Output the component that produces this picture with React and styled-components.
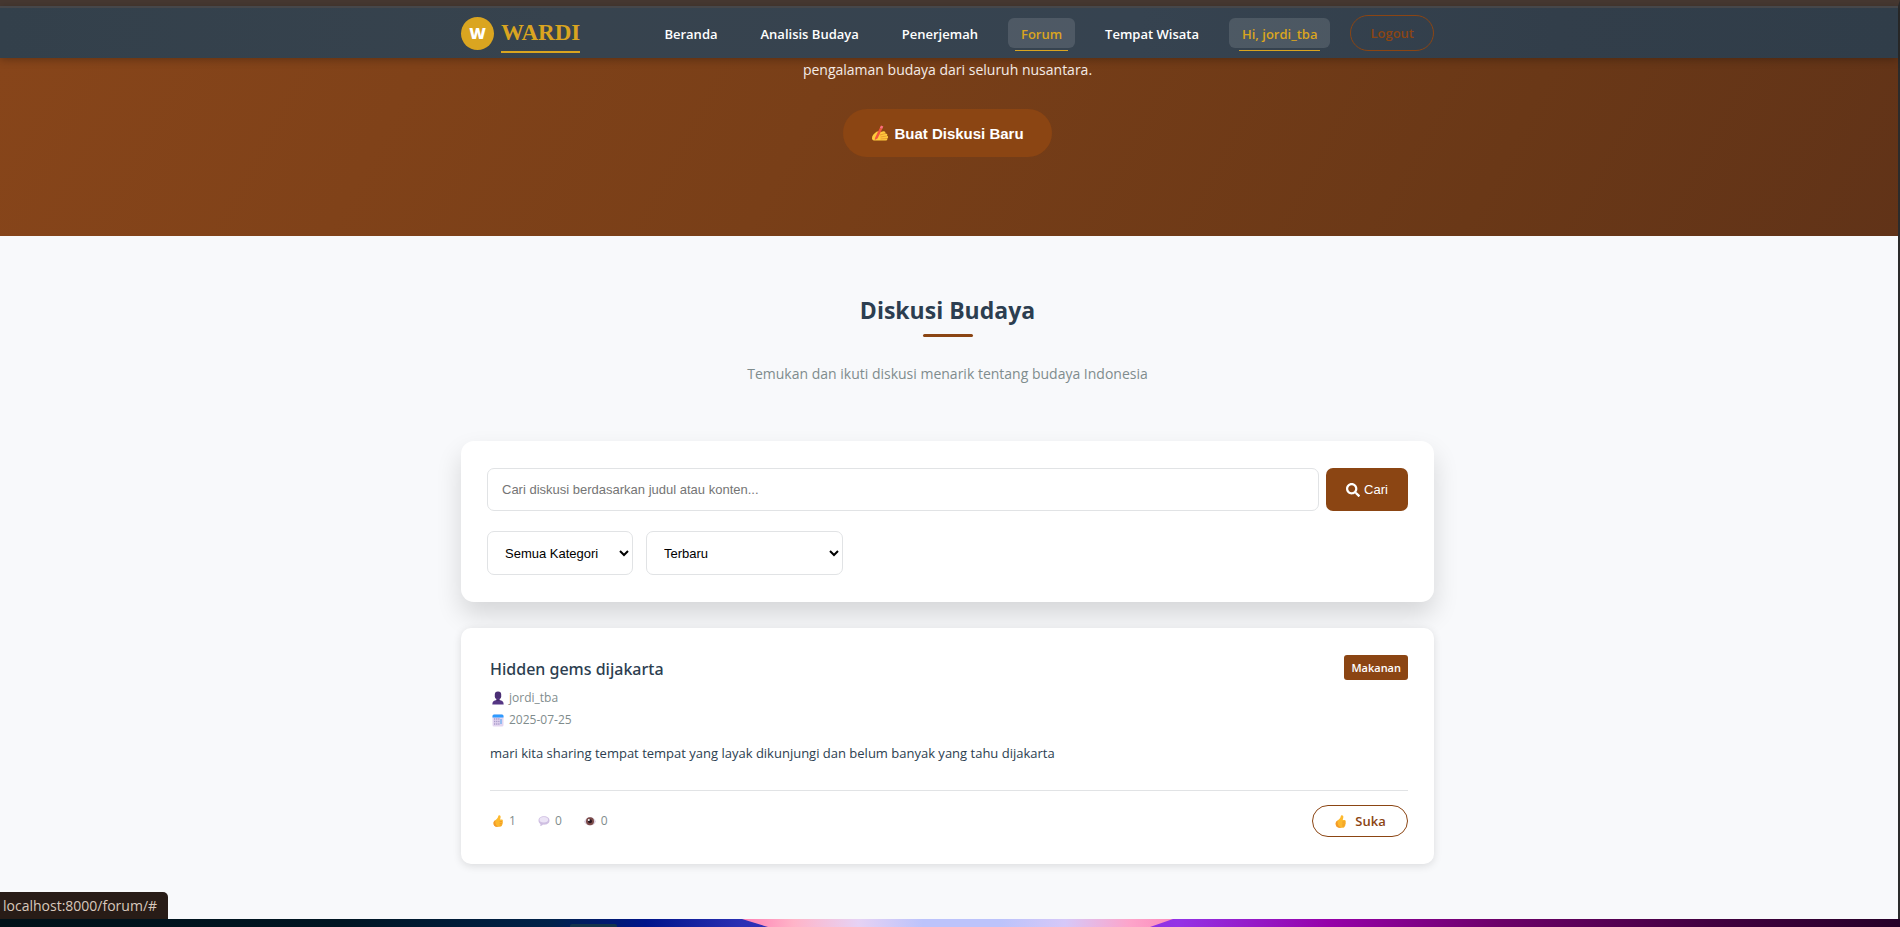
import React from 'react';
import styled, { createGlobalStyle, css } from 'styled-components';
import { FaSearch } from 'react-icons/fa';

const colors = {
    primary: '#8b4513',
    gold: '#daa520',
    dark: '#2c3e50',
    grey: '#7f8c8d',
    line: '#e1e3e5',
    page: '#f8f9fb',
};

const fonts = {
    body: '"Open Sans", "Noto Sans", sans-serif',
    title: '"Noto Sans", "Open Sans", sans-serif',
    control: '"Liberation Sans", Arial, sans-serif',
    brand: '"Liberation Serif", "Times New Roman", serif',
};

const gutter = '3px';

const GlobalStyle = createGlobalStyle`
    *, *::before, *::after {
        box-sizing: border-box;
    }
    body {
        margin: 0;
        background: #2a211d;
        color: ${colors.dark};
        font-family: ${fonts.body};
    }
    h1, h2, h3, p, ul {
        margin: 0;
        padding: 0;
    }
    a {
        color: inherit;
        text-decoration: none;
    }
    button, input, select {
        font-family: ${fonts.control};
    }
`;

const Desktop = styled.div`
    display: flex;
    flex-direction: column;
    min-height: 100vh;
`;

const WindowFrame = styled.div`
    position: relative;
    flex: 1;
    display: flex;
    flex-direction: column;
    background: ${colors.page};
    border-top: 6px solid #463831;
    border-right: 2px solid #2b2b2b;
`;

const Header = styled.header`
    position: relative;
    height: 52px;
    padding-right: ${gutter};
    border-top: 2px solid #46474a;
    background: linear-gradient(90deg, #33404b 0%, #37434e 30%, #364350 60%, #323e4a 82%, #303d49 100%);
    box-shadow: 0 2px 8px rgba(0, 0, 0, 0.25);
`;

const Container = styled.div`
    width: 100%;
    max-width: 973px;
    margin: 0 auto;
`;

const HeaderInner = styled(Container)`
    display: flex;
    align-items: center;
    justify-content: space-between;
    height: 100%;
`;

const Brand = styled.a`
    display: flex;
    align-items: center;
    gap: 7px;
`;

const BrandMark = styled.span`
    display: flex;
    align-items: center;
    justify-content: center;
    width: 33px;
    height: 33px;
    border-radius: 50%;
    background: ${colors.gold};
    color: #fff;
    font-size: 16px;
    font-weight: 800;
`;

const BrandName = styled.span`
    position: relative;
    color: ${colors.gold};
    font-family: ${fonts.brand};
    font-size: 23px;
    font-weight: 700;
    line-height: 24px;
    &::after {
        content: '';
        position: absolute;
        left: 0;
        right: 0;
        bottom: -8px;
        height: 2px;
        background: ${colors.gold};
    }
`;

const Nav = styled.nav`
    display: flex;
    align-items: center;
    gap: 17px;
`;

const activeLink = css`
    background: rgba(255, 255, 255, 0.12);
    color: ${colors.gold};
    &::after {
        content: '';
        position: absolute;
        left: 10%;
        right: 10%;
        bottom: -3px;
        height: 1px;
        background: ${colors.gold};
    }
`;

const NavLink = styled.a`
    position: relative;
    padding: 2px 13px 0;
    border-radius: 6px;
    color: #fff;
    font-size: 13px;
    font-weight: 600;
    line-height: 28px;
    white-space: nowrap;
    ${props => props.$active && activeLink}
`;

const LogoutLink = styled.a`
    margin-left: 3px;
    padding: 0 19px;
    border: 1px solid ${colors.primary};
    border-radius: 18px;
    color: ${colors.primary};
    font-size: 13px;
    font-weight: 600;
    line-height: 34px;
`;

const Hero = styled.section`
    display: flex;
    flex-direction: column;
    align-items: center;
    gap: 28px;
    padding: 0 ${gutter} 79px 0;
    background: linear-gradient(118deg, #87451a 0%, #793f18 42%, #6a3817 78%, #613318 100%);
`;

const HeroText = styled.p`
    color: #f4ece7;
    font-size: 14px;
    line-height: 23px;
`;

const CreateButton = styled.button`
    display: flex;
    align-items: center;
    gap: 5px;
    height: 48px;
    padding: 0 28px;
    border: 0;
    border-radius: 24px;
    background: ${colors.primary};
    color: #fff;
    font-size: 15px;
    font-weight: 700;
`;

const Section = styled.main`
    flex: 1;
    padding: 58px ${gutter} 55px 0;
`;

const SectionTitle = styled.h2`
    position: relative;
    font-size: 23px;
    font-weight: 700;
    line-height: 32px;
    text-align: center;
    &::after {
        content: '';
        position: absolute;
        left: calc(50% - 25px);
        bottom: -11px;
        width: 50px;
        height: 3px;
        border-radius: 2px;
        background: ${colors.primary};
    }
`;

const SectionSubtitle = styled.p`
    margin: 36px 0 55px;
    color: ${colors.grey};
    font-size: 14px;
    line-height: 24px;
    text-align: center;
`;

const SearchCard = styled.form`
    display: flex;
    flex-direction: column;
    gap: 20px;
    padding: 27px 26px;
    border-radius: 13px;
    background: #fff;
    box-shadow: 0 13px 26px rgba(0, 10, 0, 0.14);
`;

const SearchRow = styled.div`
    display: flex;
    gap: 7px;
`;

const FilterRow = styled.div`
    display: flex;
    gap: 13px;
`;

const SearchInput = styled.input`
    flex: 1;
    height: 43px;
    padding: 0 14px;
    border: 1px solid ${colors.line};
    border-radius: 7px;
    font-size: 13px;
    &::placeholder {
        color: #757575;
    }
`;

const SearchButton = styled.button`
    display: flex;
    align-items: center;
    justify-content: center;
    gap: 4px;
    width: 82px;
    border: 0;
    border-radius: 7px;
    background: ${colors.primary};
    color: #fff;
    font-size: 13px;
`;

const FilterSelect = styled.select`
    width: ${props => props.$width};
    height: 44px;
    padding: 0 0 0 13px;
    border: 1px solid ${colors.line};
    border-radius: 7px;
    background: #fff;
    color: #000;
    font-size: 13px;
`;

const ThreadCard = styled.article`
    margin-top: 26px;
    padding: 27px 26px 27px 29px;
    border-radius: 10px;
    background: #fff;
    box-shadow: 0 2px 8px rgba(0, 0, 0, 0.12);
`;

const ThreadHeader = styled.div`
    display: flex;
    align-items: flex-start;
    justify-content: space-between;
`;

const ThreadTitle = styled.h3`
    padding-bottom: 4px;
    font-family: ${fonts.title};
    font-size: 16px;
    font-weight: 500;
    line-height: 28px;
`;

const Category = styled.span`
    padding: 0 7px;
    border-radius: 3px;
    background: ${colors.primary};
    color: #fff;
    font-size: 11px;
    font-weight: 600;
    line-height: 25px;
`;

const Meta = styled.span`
    display: flex;
    align-items: center;
    gap: 5px;
    padding-left: 2px;
    color: ${colors.grey};
    font-size: 12px;
    line-height: 22px;
`;

const ThreadText = styled.p`
    margin: 10px 0 25px;
    font-size: 13px;
    line-height: 24px;
`;

const ThreadFooter = styled.div`
    display: flex;
    align-items: center;
    justify-content: space-between;
    padding-top: 14px;
    border-top: 1px solid ${colors.line};
`;

const Stats = styled.div`
    display: flex;
    gap: 20px;
`;

const LikeButton = styled.button`
    display: flex;
    align-items: center;
    justify-content: center;
    gap: 8px;
    width: 96px;
    height: 32px;
    border: 1px solid ${colors.primary};
    border-radius: 16px;
    background: #fff;
    color: ${colors.primary};
    font-family: ${fonts.body};
    font-size: 13px;
    font-weight: 600;
`;

const StatusBubble = styled.div`
    position: absolute;
    left: 0;
    bottom: 0;
    padding: 0 11px 0 3px;
    border-top-right-radius: 5px;
    background: #281c17;
    color: #d8c8bc;
    font-size: 14px;
    line-height: 27px;
`;

const Wallpaper = styled.svg`
    display: block;
    width: 100%;
    height: 8px;
`;

const WritingHand = () => (
    <svg width="18" height="18" viewBox="0 0 18 18" aria-hidden="true">
        <path d="M1 14.500C0.800 12 3 9.500 5.500 7.800C7 6.800 8.400 7.200 8.500 8.200L12.500 7.200C14 7 15 8.400 14.200 9.400C16 9.200 17 10.700 16 11.800C17.500 12.200 17.500 14 16.300 14.400C16.700 15.600 15.800 16.600 14.300 16.600H4C2 16.600 1 15.800 1 14.500Z" fill="#ffc93c" />
        <path d="M9 11L14 9.600M9.500 13L15.800 12M9.500 15L16 14.500" stroke="#e8912d" strokeWidth="0.800" />
        <path d="M4 14L8.800 4L11.200 5L6.500 14.500L3.800 16Z" fill="#f0573f" />
        <path d="M8.800 4L10 1.500L12.300 2.600L11.200 5Z" fill="#ff6f7d" />
    </svg>
);

const Thumb = ({ size = 13 }) => (
    <svg width={size} height={size} viewBox="0 0 13 14" aria-hidden="true">
        <path d="M7.500 0.400C9 -0.200 9.900 1.300 9.500 3L8.900 5.300H10.500C12.300 5.300 12.600 7 11.700 7.600C12.500 8.200 12.400 9.500 11.600 9.900C12 10.700 11.700 11.600 11 11.900C11.100 13 10.400 13.700 9 13.700H5C2.700 13.700 1.300 12 1.300 9.500C1.300 7.500 2.500 6.400 4 5.400C6 4 6.800 2.500 6.800 1.200Z" fill="#fdb92e" />
        <path d="M8.500 7.600H11.700M8.500 9.800H11.600M8.400 11.800H11" stroke="#e58a22" strokeWidth="0.700" />
        <path d="M1.300 9.500C1.300 12 2.700 13.700 5 13.700H8C5 12.800 3.200 11.500 3.300 6C2 6.900 1.300 8 1.300 9.500Z" fill="#f39a2b" />
    </svg>
);

const Person = () => (
    <svg width="12" height="14" viewBox="0 0 12 14" aria-hidden="true">
        <rect x="2.800" y="0.500" width="6.400" height="7.800" rx="3" fill="#4b2f74" />
        <path d="M4.500 7H7.500V9C10 9.300 11.700 10.500 11.700 13.500H0.300C0.300 10.500 2 9.300 4.500 9Z" fill="#553684" />
        <path d="M4.500 8.200C5.400 8.900 6.600 8.900 7.500 8.200V9.500H4.500Z" fill="#351d52" />
    </svg>
);

const Calendar = () => (
    <svg width="12" height="13" viewBox="0 0 12 13" aria-hidden="true">
        <rect x="0.500" y="0.500" width="11" height="12" rx="1.500" fill="#e3d5f0" />
        <path d="M0.500 3.500V2Q0.500 0.500 2 0.500H10Q11.500 0.500 11.500 2V3.500Z" fill="#2e9bff" />
        <path d="M2 5H7.500M2 7.500H7.500M2 10H7.500" stroke="#a99cca" strokeWidth="1.300" strokeDasharray="1.300 0.800" />
        <path d="M9 5V10" stroke="#6aaef2" strokeWidth="1.300" />
    </svg>
);

const Bubble = () => (
    <svg width="12" height="12" viewBox="0 0 12 12" aria-hidden="true">
        <path d="M6 1.200C9.300 1.200 11.500 3 11.500 5.500C11.500 8 9.300 9.700 6 9.700L5 9.600C4 10.800 3 11 1.800 11C2.500 10.300 2.600 9.500 2.400 8.900C1.200 8.100 0.500 7 0.500 5.500C0.500 3 2.700 1.200 6 1.200Z" fill="#cfbfe2" />
        <ellipse cx="5.800" cy="4.700" rx="4.300" ry="2.700" fill="#ece4f6" />
    </svg>
);

const Eye = () => (
    <svg width="12" height="12" viewBox="0 0 12 12" aria-hidden="true">
        <path d="M0 6.800C1.500 3.500 3.700 2 6.200 2S10.500 3.500 12 6.500C10.500 9.500 8.500 10.500 6 10.500S1.500 9.500 0 6.800Z" fill="#dcd2e2" />
        <circle cx="6" cy="6.200" r="4" fill="#7a4a48" />
        <circle cx="6" cy="6.200" r="2" fill="#2a1620" />
        <circle cx="4.800" cy="4.900" r="1" fill="#fff" />
    </svg>
);

const DesktopWallpaper = () => (
    <Wallpaper viewBox="0 0 1900 8" preserveAspectRatio="none" aria-hidden="true">
        <defs>
            <linearGradient id="sky">
                <stop offset="0" stopColor="#001219" />
                <stop offset="0.180" stopColor="#001522" />
                <stop offset="0.290" stopColor="#00224a" />
                <stop offset="0.340" stopColor="#00148a" />
                <stop offset="0.390" stopColor="#2a30b4" />
                <stop offset="0.620" stopColor="#9433e6" />
                <stop offset="0.700" stopColor="#9600a8" />
                <stop offset="0.790" stopColor="#6c0068" />
                <stop offset="0.900" stopColor="#420040" />
                <stop offset="1" stopColor="#260028" />
            </linearGradient>
            <linearGradient id="bloom">
                <stop offset="0" stopColor="#ff7fb4" />
                <stop offset="0.120" stopColor="#ffb4c8" />
                <stop offset="0.270" stopColor="#e6d2f4" />
                <stop offset="0.420" stopColor="#bcc3fb" />
                <stop offset="0.600" stopColor="#bcc3fb" />
                <stop offset="0.750" stopColor="#d6c8f8" />
                <stop offset="0.900" stopColor="#fda4ca" />
                <stop offset="1" stopColor="#fc8cbc" />
            </linearGradient>
        </defs>
        <rect width="1900" height="8" fill="url(#sky)" />
        <path d="M742 0H1173L1150 8H768Z" fill="url(#bloom)" />
        <rect x="570" y="5" width="47" height="6" rx="2" fill="#12344c" />
    </Wallpaper>
);

const navItems = [
    { label: 'Beranda' },
    { label: 'Analisis Budaya' },
    { label: 'Penerjemah' },
    { label: 'Forum', active: true },
    { label: 'Tempat Wisata' },
    { label: 'Hi, jordi_tba', active: true },
];

const threads = [
    {
        id: 1,
        title: 'Hidden gems dijakarta',
        author: 'jordi_tba',
        date: '2025-07-25',
        category: 'Makanan',
        content: 'mari kita sharing tempat tempat yang layak dikunjungi dan belum banyak yang tahu dijakarta',
        likes: 1,
        comments: 0,
        views: 0,
    },
];

const Thread = ({ thread }) => (
    <ThreadCard>
        <ThreadHeader>
            <ThreadTitle>{thread.title}</ThreadTitle>
            <Category>{thread.category}</Category>
        </ThreadHeader>
        <Meta><Person />{thread.author}</Meta>
        <Meta><Calendar />{thread.date}</Meta>
        <ThreadText>{thread.content}</ThreadText>
        <ThreadFooter>
            <Stats>
                <Meta><Thumb size={12} />{thread.likes}</Meta>
                <Meta><Bubble />{thread.comments}</Meta>
                <Meta><Eye />{thread.views}</Meta>
            </Stats>
            <LikeButton type="button"><Thumb />Suka</LikeButton>
        </ThreadFooter>
    </ThreadCard>
);

const App = () => (
    <Desktop>
        <GlobalStyle />
        <WindowFrame>
            <Header>
                <HeaderInner>
                    <Brand href="#">
                        <BrandMark>W</BrandMark>
                        <BrandName>WARDI</BrandName>
                    </Brand>
                    <Nav>
                        {navItems.map(item => (
                            <NavLink key={item.label} href="#" $active={item.active}>
                                {item.label}
                            </NavLink>
                        ))}
                        <LogoutLink href="#">Logout</LogoutLink>
                    </Nav>
                </HeaderInner>
            </Header>
            <Hero>
                <HeroText>pengalaman budaya dari seluruh nusantara.</HeroText>
                <CreateButton type="button"><WritingHand />Buat Diskusi Baru</CreateButton>
            </Hero>
            <Section>
                <Container>
                    <SectionTitle>Diskusi Budaya</SectionTitle>
                    <SectionSubtitle>
                        Temukan dan ikuti diskusi menarik tentang budaya Indonesia
                    </SectionSubtitle>
                    <SearchCard onSubmit={e => e.preventDefault()}>
                        <SearchRow>
                            <SearchInput
                                type="text"
                                aria-label="Cari diskusi"
                                placeholder="Cari diskusi berdasarkan judul atau konten..."
                            />
                            <SearchButton type="submit"><FaSearch size={14} />Cari</SearchButton>
                        </SearchRow>
                        <FilterRow>
                            <FilterSelect $width="146px" aria-label="Kategori">
                                <option>Semua Kategori</option>
                            </FilterSelect>
                            <FilterSelect $width="197px" aria-label="Urutkan">
                                <option>Terbaru</option>
                            </FilterSelect>
                        </FilterRow>
                    </SearchCard>
                    {threads.map(thread => <Thread key={thread.id} thread={thread} />)}
                </Container>
            </Section>
            <StatusBubble>localhost:8000/forum/#</StatusBubble>
        </WindowFrame>
        <DesktopWallpaper />
    </Desktop>
);

export default App;
